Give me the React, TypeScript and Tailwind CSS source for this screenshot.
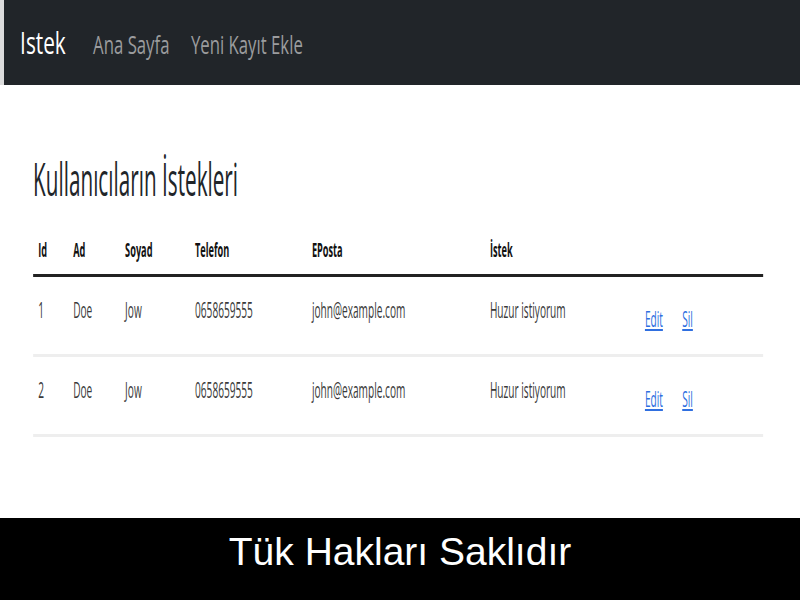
const rows = [
  { id: 1, ad: "Doe", soyad: "Jow", telefon: "0658659555", eposta: "john@example.com", istek: "Huzur istiyorum" },
  { id: 2, ad: "Doe", soyad: "Jow", telefon: "0658659555", eposta: "john@example.com", istek: "Huzur istiyorum" },
];

const headers = ["Id", "Ad", "Soyad", "Telefon", "EPosta", "İstek", ""];

const cols = "grid grid-cols-[76px_113px_152px_254px_387px_337px_1fr]";

export default function App() {
  return (
    <div className="flex h-[600px] w-full flex-col overflow-hidden bg-white">
      {/* navbar */}
      <header className="h-[85px] shrink-0 overflow-hidden border-l-4 border-[#dcdcdc] bg-[#212529]">
        <nav
          className="flex w-[1200px] origin-left scale-x-[0.67] items-baseline pl-[24px] pt-[27px]"
          style={{ fontFamily: '"Open Sans", "Noto Sans", sans-serif' }}
        >
          <a className="w-[109px] text-[31px] leading-none text-white">Istek</a>
          <a className="w-[146px] text-[25px] leading-none text-[#9b9c9e]">Ana Sayfa</a>
          <a className="text-[25px] leading-none text-[#9b9c9e]">Yeni Kayıt Ekle</a>
        </nav>
      </header>

      {/* content */}
      <main className="flex-1 overflow-hidden">
        <div
          className="w-[1739px] origin-left scale-x-[0.46] pl-[72px]"
          style={{ fontFamily: '"Open Sans", "Noto Sans", sans-serif' }}
        >
          <h1 className="mt-[67px] text-[45px] leading-[54px] text-[#212529]">Kullanıcıların İstekleri</h1>

          <div className="mt-[20px] w-[1587px]">
            <div className={`${cols} border-b-[3px] border-[#222]`}>
              {headers.map((h, i) => (
                <div
                  key={i}
                  className="pb-[10px] pl-[11px] pt-[10px] text-[20px] font-bold leading-[28px] text-[#111]"
                >
                  {h}
                </div>
              ))}
            </div>
            {rows.map((r) => (
              <div key={r.id} className={`${cols} h-[80px] border-b-[3px] border-[#eeeeee]`}>
                {[r.id, r.ad, r.soyad, r.telefon, r.eposta, r.istek].map((v, i) => (
                  <div
                    key={i}
                    className="whitespace-nowrap pl-[11px] pt-[16px] text-[22px] leading-[32px] text-[#3a3a3a]"
                  >
                    {v}
                  </div>
                ))}
                <div className="whitespace-nowrap pl-[11px] pt-[25px] text-[22px] leading-[32px]">
                  <a href="#" className="text-[#2f6fe0] underline">Edit</a>
                  <a href="#" className="ml-[42px] text-[#2f6fe0] underline">Sil</a>
                </div>
              </div>
            ))}
          </div>
        </div>
      </main>

      {/* footer */}
      <footer className="flex h-[82px] shrink-0 justify-center bg-black pt-[14px]">
        <p
          className="text-[39px] leading-none text-white"
          style={{ fontFamily: '"Liberation Sans", Arial, sans-serif' }}
        >
          Tük Hakları Saklıdır
        </p>
      </footer>
    </div>
  );
}
